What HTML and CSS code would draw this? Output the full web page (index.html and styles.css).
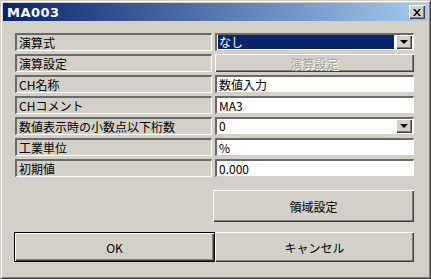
FILE: index.html
```html
<!DOCTYPE html>
<html lang="ja">
<head>
    <meta charset="UTF-8">
    <title>MA003</title>
    <link rel="stylesheet" href="styles.css">
</head>
<body>
    <div class="window">
        <div class="titlebar">
            <span class="title">MA003</span>
            <span class="close-btn">
                <svg width="8" height="7" viewBox="0 0 8 7"><path d="M0 0h2l2 2.5L6 0h2L5 3.5 8 7H6L4 4.5 2 7H0l3-3.5z" fill="#000"/></svg>
            </span>
        </div>

        <div class="content">
            <div class="grid">
                <div class="label">演算式</div>
                <div class="combo selected">
                    <span class="combo-text">なし</span>
                    <span class="drop-btn"><i></i></span>
                </div>

                <div class="label">演算設定</div>
                <div class="btn disabled">演算設定</div>

                <div class="label">CH名称</div>
                <div class="field">数値入力</div>

                <div class="label">CHコメント</div>
                <div class="field">MA3</div>

                <div class="label">数値表示時の小数点以下桁数</div>
                <div class="combo">
                    <span class="combo-text">0</span>
                    <span class="drop-btn"><i></i></span>
                </div>

                <div class="label">工業単位</div>
                <div class="field">%</div>

                <div class="label">初期値</div>
                <div class="field">0.000</div>
            </div>

            <div class="region-row">
                <div class="btn region-btn">領域設定</div>
            </div>

            <div class="bottom-row">
                <div class="btn ok-btn">OK</div>
                <div class="btn cancel-btn">キャンセル</div>
            </div>
        </div>
    </div>
</body>
</html>
```

FILE: styles.css
```css
* { box-sizing: border-box; margin: 0; padding: 0; }

body {
    font-family: "Noto Sans CJK JP", "Liberation Sans", sans-serif;
    font-size: 12px;
    color: #000;
    background: #d4d0c8;
}

.window {
    width: 431px; height: 279px;
    background: #d4d0c8;
    border-top: 1px solid #d4d0c8; border-left: 1px solid #d4d0c8;
    border-right: 1px solid #404040; border-bottom: 1px solid #404040;
    box-shadow: inset 1px 1px 0 #fff, inset -1px -1px 0 #808080;
    padding: 2px;
}

/* Barra de titulo */
.titlebar {
    height: 18px;
    background: linear-gradient(90deg, #0a246a, #a6caf0);
    display: flex; align-items: center; justify-content: space-between;
    padding: 0 3px 0 4px;
}
.title {
    color: #fff; font-weight: bold; font-size: 13px;
    font-family: "DejaVu Sans", sans-serif;
    letter-spacing: 0.5px;
}
.close-btn {
    width: 16px; height: 14px;
    background: #d4d0c8;
    display: flex; align-items: center; justify-content: center;
    box-shadow: inset 1px 1px 0 #fff, inset -1px -1px 0 #404040, inset -2px -2px 0 #808080;
}

.content { padding: 12px 12px 0 12px; }

.grid {
    display: grid;
    grid-template-columns: 197px 199px;
    grid-auto-rows: 18px;
    column-gap: 3px; row-gap: 3px;
}

/* Campos da esquerda */
.label {
    line-height: 16px;
    padding-left: 2px;
    border-top: 2px solid #6a6a6a; border-left: 2px solid #6a6a6a;
    border-right: 1px solid #fff; border-bottom: 1px solid #fff;
    white-space: nowrap; overflow: hidden;
}

.field, .combo {
    background: #fff;
    border-top: 2px solid #6a6a6a; border-left: 2px solid #6a6a6a;
    border-right: 1px solid #fff; border-bottom: 1px solid #d4d0c8;
    padding-left: 2px;
    line-height: 15px;
}
.combo { display: flex; justify-content: space-between; align-items: stretch; padding: 0 1px 1px 1px; }
.combo-text { padding-left: 1px; line-height: 14px; }
.combo.selected .combo-text { background: #0a246a; color: #fff; flex: 1; margin-right: 2px; }
.drop-btn {
    width: 16px;
    background: #d4d0c8;
    display: flex; align-items: center; justify-content: center;
    box-shadow: inset 1px 1px 0 #fff, inset -1px -1px 0 #404040, inset -2px -2px 0 #808080;
}
.drop-btn i {
    width: 0; height: 0;
    border-left: 4px solid transparent; border-right: 4px solid transparent;
    border-top: 4px solid #000;
}

/* Botoes */
.btn {
    background: #d4d0c8;
    display: flex; align-items: center; justify-content: center;
    box-shadow: inset 1px 1px 0 #fff, inset -1px -1px 0 #404040, inset -2px -2px 0 #808080;
}
.btn.disabled { color: #a0a0a0; text-shadow: 1px 1px 0 #fff; }

.region-row { display: flex; justify-content: flex-end; margin-top: 13px; padding-right: 2px; }
.region-btn { width: 201px; height: 32px; }

.bottom-row { display: flex; margin-top: 10px; margin-left: -1px; }
.ok-btn {
    width: 201px; height: 30px;
    border: 1px solid #000;
    box-shadow: inset 1px 1px 0 #fff, inset -1px -1px 0 #404040, inset -2px -2px 0 #808080;
}
.cancel-btn { width: 199px; height: 30px; }
```
